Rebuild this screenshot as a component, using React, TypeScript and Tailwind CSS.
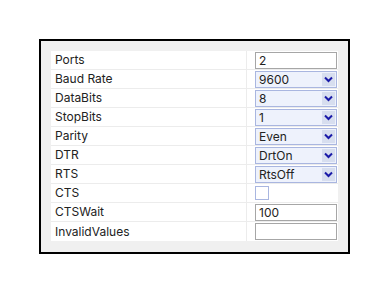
import React from "react";

type Row =
  | { label: string; kind: "text"; value: string }
  | { label: string; kind: "select"; value: string }
  | { label: string; kind: "check" };

const rows: Row[] = [
  { label: "Ports", kind: "text", value: "2" },
  { label: "Baud Rate", kind: "select", value: "9600" },
  { label: "DataBits", kind: "select", value: "8" },
  { label: "StopBits", kind: "select", value: "1" },
  { label: "Parity", kind: "select", value: "Even" },
  { label: "DTR", kind: "select", value: "DrtOn" },
  { label: "RTS", kind: "select", value: "RtsOff" },
  { label: "CTS", kind: "check" },
  { label: "CTSWait", kind: "text", value: "100" },
  { label: "InvalidValues", kind: "text", value: "" },
];

function Chevron() {
  return (
    <svg width="9" height="7" viewBox="0 0 9 7">
      <path d="M1 1.5 L4.5 5 L8 1.5" fill="none" stroke="#1a1aa8" strokeWidth="2" />
    </svg>
  );
}

function Value({ row }: { row: Row }) {
  if (row.kind === "text") {
    return (
      <div className="h-[17px] w-[82px] border border-[#a6a6a6] bg-white pl-[3px] text-[12px] leading-[15px] text-[#222]">
        {row.value}
      </div>
    );
  }
  if (row.kind === "select") {
    return (
      <div className="flex h-[17px] w-[82px] items-center border border-[#a9b6e0] bg-[#eef2fc] pl-[3px] pr-[1px] text-[12px] leading-[15px] text-[#222]">
        <span className="flex-1">{row.value}</span>
        <span className="flex h-[13px] w-[13px] items-center justify-center bg-[#d7deef]">
          <Chevron />
        </span>
      </div>
    );
  }
  return <div className="h-[14px] w-[14px] border border-[#a9b6e0] bg-white" />;
}

export default function App() {
  return (
    <div
      className="h-[291px] w-[389px] bg-white pl-[39px] pt-[39px]"
      style={{ fontFamily: "Inter, 'Noto Sans', sans-serif" }}
    >
      <div className="w-[311px] border-2 border-black bg-[#f0f0f0] pb-[11px] pl-[10px] pr-[10px] pt-[10px]">
        <div className="bg-white">
          {rows.map((r, i) => (
            <div key={r.label} className="flex h-[19px]">
              <div
                className={`flex w-[196px] items-center pl-[4px] text-[12px] text-[#222] ${
                  i < rows.length - 1 ? "border-b border-[#ececec]" : ""
                } border-r border-[#ececec]`}
              >
                {r.label}
              </div>
              <div
                className={`flex flex-1 items-center pl-[8px] ${
                  i < rows.length - 1 ? "border-b border-[#ececec]" : ""
                }`}
              >
                <Value row={r} />
              </div>
            </div>
          ))}
        </div>
      </div>
    </div>
  );
}
